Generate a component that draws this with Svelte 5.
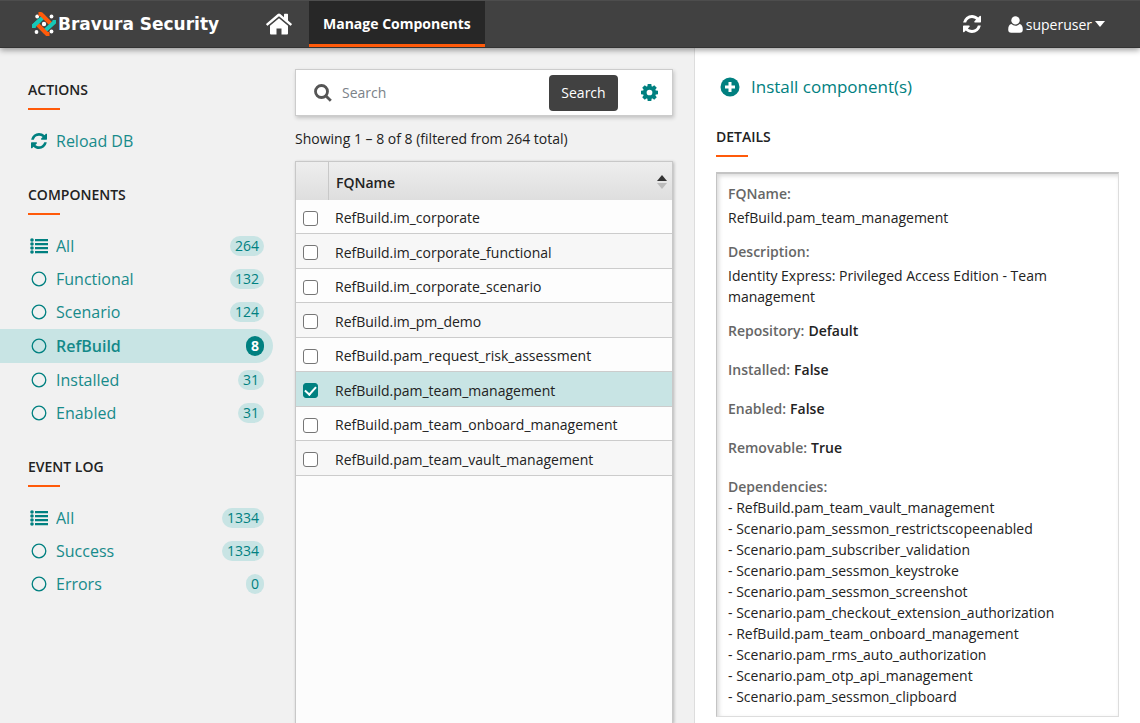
<script>
	let query = $state('');
	let activeFilter = $state('RefBuild');
	let selected = $state(['RefBuild.pam_team_management']);

	const components = [
		{ name: 'All', count: 264, icon: 'list' },
		{ name: 'Functional', count: 132 },
		{ name: 'Scenario', count: 124 },
		{ name: 'RefBuild', count: 8 },
		{ name: 'Installed', count: 31 },
		{ name: 'Enabled', count: 31 }
	];

	const events = [
		{ name: 'All', count: 1334, icon: 'list' },
		{ name: 'Success', count: 1334 },
		{ name: 'Errors', count: 0 }
	];

	const rows = [
		'RefBuild.im_corporate',
		'RefBuild.im_corporate_functional',
		'RefBuild.im_corporate_scenario',
		'RefBuild.im_pm_demo',
		'RefBuild.pam_request_risk_assessment',
		'RefBuild.pam_team_management',
		'RefBuild.pam_team_onboard_management',
		'RefBuild.pam_team_vault_management'
	];

	const flags = [
		{ label: 'Repository', value: 'Default' },
		{ label: 'Installed', value: 'False' },
		{ label: 'Enabled', value: 'False' },
		{ label: 'Removable', value: 'True' }
	];

	const dependencies = [
		'RefBuild.pam_team_vault_management',
		'Scenario.pam_sessmon_restrictscopeenabled',
		'Scenario.pam_subscriber_validation',
		'Scenario.pam_sessmon_keystroke',
		'Scenario.pam_sessmon_screenshot',
		'Scenario.pam_checkout_extension_authorization',
		'RefBuild.pam_team_onboard_management',
		'Scenario.pam_rms_auto_authorization',
		'Scenario.pam_otp_api_management',
		'Scenario.pam_sessmon_clipboard'
	];
</script>

{#snippet refreshIcon()}
	<svg viewBox="0 0 1536 1536" aria-hidden="true">
		<path
			d="M1511 928q0 5-1 7-64 268-268 434.500T764 1536q-146 0-282.500-55T238 1324l-129 129q-19 19-45 19t-45-19-19-45V960q0-26 19-45t45-19h448q26 0 45 19t19 45-19 45l-137 137q71 66 161 102t187 36q134 0 250-65t186-179q11-17 53-117 8-23 30-23h192q13 0 22.500 9.500t9.500 22.500zm25-800v448q0 26-19 45t-45 19h-448q-26 0-45-19t-19-45 19-45l138-138Q969 256 768 256q-134 0-250 65T332 500q-11 17-53 117-8 23-30 23H50q-13 0-22.500-9.500T18 608v-7q65-268 270-434.500T768 0q146 0 284 55.500T1297 212l130-129q19-19 45-19t45 19 19 45z"
		/>
	</svg>
{/snippet}

{#snippet navList(items, active)}
	<ul class="nav-list">
		{#each items as item (item.name)}
			<li>
				<a
					href="#{item.name.toLowerCase()}"
					class="nav-item"
					class:active={item.name === active}
					onclick={() => items === components && (activeFilter = item.name)}
				>
					<span class="nav-icon">
						{#if item.icon === 'list'}
							<svg viewBox="0 0 18 16" aria-hidden="true">
								<circle cx="2" cy="2" r="1.800" />
								<circle cx="2" cy="6" r="1.800" />
								<circle cx="2" cy="10" r="1.800" />
								<circle cx="2" cy="14" r="1.800" />
								<path d="M5 1h13v2.200H5zM5 5h13v2.200H5zM5 9h13v2.200H5zM5 13h13v2.200H5z" />
							</svg>
						{:else}
							<svg viewBox="0 0 18 16" aria-hidden="true">
								<circle cx="9" cy="8" r="6.800" class="ring" />
							</svg>
						{/if}
					</span>
					<span class="nav-name">{item.name}</span>
					<span class="count">{item.count}</span>
				</a>
			</li>
		{/each}
	</ul>
{/snippet}

<div class="page">
	<header class="topbar">
		<a href="#top" class="brand">
			<svg class="brand-mark" viewBox="0 0 24 24" aria-hidden="true">
				<g fill="#fff">
					<circle cx="5.200" cy="4.500" r="1.900" />
					<circle cx="19.500" cy="4.500" r="1.900" />
					<circle cx="4.500" cy="20" r="1.900" />
					<circle cx="19.500" cy="19.500" r="1.900" />
					<circle cx="12" cy="12" r="2.200" />
				</g>
				<g fill="none" stroke-width="4" stroke-linejoin="round">
					<path stroke="#17c8b8" d="M1.500 16v-2L13 3.500" />
					<path stroke="#ff5a0a" d="M6.500 2H9l10 10" />
					<path stroke="#17c8b8" d="M22.500 8v2L11 20.500" />
					<path stroke="#ff5a0a" d="M17.500 22H15L5 12" />
					<path stroke="#17c8b8" d="M1.500 16v-2L8 8" />
				</g>
			</svg>
			<span>Bravura Security</span>
		</a>
		<a href="#home" class="home" aria-label="Home">
			<svg viewBox="0 0 26 22" aria-hidden="true">
				<path d="M13 5.200 4 12.800V20.500q0 1 1 1h5.500v-6h5v6H21q1 0 1-1v-7.700z" />
				<path
					d="M25.700 10.700 22 7.500V1.500q0-.7-.7-.7h-2.600q-.7 0-.7.7v2.700L14.300.900q-1.300-1-2.600 0L.300 10.700q-.4.400-.1.800l.9 1q.4.400.8.100L13 3.300l11.100 9.300q.5.300.8-.1l.9-1q.3-.4-.1-.8z"
				/>
			</svg>
		</a>
		<a href="#components" class="tab">Manage Components</a>
		<div class="tools">
			<button type="button" class="refresh" aria-label="Refresh">{@render refreshIcon()}</button>
			<button type="button" class="user">
				<svg class="person" viewBox="0 0 15 17" aria-hidden="true">
					<circle cx="7.500" cy="4.400" r="4.200" />
					<path d="M3.400 8q-3.200.6-3.200 5.500 0 3.300 3 3.300h8.600q3 0 3-3.300 0-4.900-3.200-5.500-1.800 1.700-4.100 1.700T3.400 8z" />
				</svg>
				<span>superuser</span>
				<svg class="caret" viewBox="0 0 10 6" aria-hidden="true"><path d="M0 0h10L5 6z" /></svg>
			</button>
		</div>
	</header>

	<div class="columns">
		<nav class="sidebar">
			<section>
				<h2>Actions</h2>
				<a href="#reload" class="nav-item">
					<span class="nav-icon">{@render refreshIcon()}</span>
					<span class="nav-name">Reload DB</span>
				</a>
			</section>
			<section>
				<h2>Components</h2>
				{@render navList(components, activeFilter)}
			</section>
			<section>
				<h2>Event log</h2>
				{@render navList(events, null)}
			</section>
		</nav>

		<main class="results">
			<form class="search" onsubmit={(e) => e.preventDefault()}>
				<svg class="lens" viewBox="0 0 18 18" aria-hidden="true">
					<circle cx="7.500" cy="7.500" r="6" />
					<path d="m12 12 4.800 4.800" />
				</svg>
				<input type="text" placeholder="Search" aria-label="Search" bind:value={query} />
				<button type="submit" class="go">Search</button>
				<button type="button" class="settings" aria-label="Settings">
					<svg viewBox="0 0 16 16" aria-hidden="true">
						{#each [0, 45, 90, 135] as angle}
							<path
								transform="rotate({angle} 8 8)"
								d="M6.300 0h3.400l.5 3.500H5.800zM5.800 12.500h4.400L9.700 16H6.300z"
							/>
						{/each}
						<circle cx="8" cy="8" r="4.400" fill="none" stroke="currentColor" stroke-width="3.400" />
					</svg>
				</button>
			</form>
			<p class="summary">Showing 1 – 8 of 8 (filtered from 264 total)</p>
			<div class="table-wrap">
				<table>
					<thead>
						<tr>
							<th class="check"></th>
							<th>
								<span class="th-inner">
									FQName
									<svg viewBox="0 0 10 14" aria-hidden="true">
										<path d="M5 0l5 6H0z" fill="#333" />
										<path d="M0 8h10l-5 6z" fill="#bbb" />
									</svg>
								</span>
							</th>
						</tr>
					</thead>
					<tbody>
						{#each rows as row (row)}
							<tr class:selected={selected.includes(row)}>
								<td class="check">
									<input type="checkbox" value={row} aria-label={row} bind:group={selected} />
								</td>
								<td>{row}</td>
							</tr>
						{/each}
					</tbody>
				</table>
			</div>
		</main>

		<aside class="details">
			<a href="#install" class="install">
				<svg viewBox="0 0 20 20" aria-hidden="true">
					<circle cx="10" cy="10" r="9.500" />
					<path d="M10 5v10M5 10h10" />
				</svg>
				<span>Install component(s)</span>
			</a>
			<h2>Details</h2>
			<dl class="card">
				<div class="stacked">
					<dt>FQName:</dt>
					<dd>RefBuild.pam_team_management</dd>
				</div>
				<div class="stacked">
					<dt>Description:</dt>
					<dd>Identity Express: Privileged Access Edition - Team management</dd>
				</div>
				{#each flags as flag (flag.label)}
					<div class="inline">
						<dt>{flag.label}:</dt>
						<dd>{flag.value}</dd>
					</div>
				{/each}
				<div>
					<dt>Dependencies:</dt>
					{#each dependencies as dependency (dependency)}
						<dd>- {dependency}</dd>
					{/each}
				</div>
			</dl>
		</aside>
	</div>
</div>

<style>
	:global(body) {
		background: #f1f1f1;
	}

	.page {
		--teal: #008080;
		--pale: #c8e4e4;
		--orange: #ff5a0a;
		height: 100vh;
		display: flex;
		flex-direction: column;
		overflow: hidden;
		color: #222;
		font: 14px/21px 'Open Sans', sans-serif;
	}

	.page * {
		box-sizing: border-box;
	}

	a {
		color: inherit;
		text-decoration: none;
	}

	button {
		padding: 0;
		border: 0;
		background: none;
		color: inherit;
		font: inherit;
		cursor: pointer;
	}

	svg {
		display: block;
		flex: none;
		fill: currentColor;
	}

	.topbar {
		position: relative;
		z-index: 1;
		flex: none;
		height: 48px;
		display: flex;
		align-items: stretch;
		background: #414141;
		border-top: 1px solid #4d4d4d;
		border-bottom: 1px solid #333;
		box-shadow: 0 2px 6px rgba(0, 0, 0, 0.4);
		color: #fff;
	}

	.brand {
		width: 266px;
		padding-left: 32px;
		display: flex;
		align-items: center;
		gap: 2px;
		font: 700 17px/24px 'DejaVu Sans', sans-serif;
		white-space: nowrap;
	}

	.brand-mark {
		width: 24px;
		height: 24px;
	}

	.home {
		width: 43px;
		display: flex;
		align-items: center;
	}

	.home svg {
		width: 26px;
		height: 22px;
	}

	.tab {
		padding: 2px 14px 0;
		display: flex;
		align-items: center;
		background: #272727;
		border-bottom: 3px solid var(--orange);
		font-weight: 700;
	}

	.tools {
		margin-left: auto;
		padding-right: 35px;
		display: flex;
		align-items: center;
		gap: 27px;
	}

	.refresh svg {
		width: 18px;
		height: 18px;
	}

	.user {
		display: flex;
		align-items: center;
		gap: 3px;
	}

	.person {
		width: 15px;
		height: 17px;
	}

	.caret {
		width: 10px;
		height: 6px;
	}

	.columns {
		flex: 1;
		min-height: 0;
		display: grid;
		grid-template-columns: 295px minmax(0, 399fr) minmax(0, 446fr);
		grid-template-rows: minmax(0, 1fr);
	}

	h2 {
		margin: 0;
		font-size: 14px;
		line-height: 20px;
		font-weight: 600;
		text-transform: uppercase;
	}

	h2::after {
		content: '';
		display: block;
		width: 32px;
		height: 2px;
		margin-top: 8px;
		background: var(--orange);
	}

	.sidebar {
		padding: 32px 22px 0 0;
		display: flex;
		flex-direction: column;
		gap: 28px;
		color: var(--teal);
		font-size: 16px;
		line-height: 24px;
	}

	.sidebar h2 {
		margin: 0 0 14px 28px;
		color: #222;
	}

	.nav-list {
		margin: 0;
		padding: 0;
		list-style: none;
	}

	.nav-item {
		height: 33px;
		padding: 0 9px 0 30px;
		display: flex;
		align-items: center;
		gap: 8px;
	}

	.nav-item.active {
		height: 34px;
		margin-top: 1px;
		background: var(--pale);
		border-radius: 0 17px 17px 0;
		font-weight: 600;
	}

	.nav-icon {
		width: 18px;
		display: grid;
		place-items: center;
	}

	.nav-icon svg {
		width: 18px;
		height: 16px;
	}

	.nav-name {
		opacity: 0.9;
	}

	.ring {
		fill: none;
		stroke: currentColor;
		stroke-width: 1.3;
	}

	.count {
		margin-left: auto;
		padding: 0 5px;
		background: var(--pale);
		border-radius: 10px;
		font-size: 14px;
		line-height: 20px;
	}

	.active .count {
		background: var(--teal);
		color: #fff;
		font-weight: 700;
	}

	.results {
		padding: 21px 21px 0 0;
		display: flex;
		flex-direction: column;
	}

	.search {
		height: 47px;
		padding-left: 18px;
		display: flex;
		align-items: center;
		background: #fff;
		border: 1px solid #ccc;
		box-shadow: 1px 2px 4px rgba(0, 0, 0, 0.2);
	}

	.lens {
		width: 18px;
		height: 18px;
		fill: none;
		stroke: #555;
		stroke-width: 2.8;
	}

	.search input {
		flex: 1;
		min-width: 0;
		padding: 0 10px;
		border: 0;
		outline: 0;
		color: #222;
		font: inherit;
	}

	.search input::placeholder {
		color: #7b8288;
	}

	.go {
		width: 69px;
		height: 36px;
		background: #414141;
		border-radius: 4px;
		color: #fff;
	}

	.settings {
		width: 54px;
		display: grid;
		place-items: center;
		padding-left: 8px;
		color: var(--teal);
	}

	.settings svg {
		width: 17px;
		height: 17px;
	}

	.summary {
		margin: 12px 0;
	}

	.table-wrap {
		flex: 1;
		background: #fcfcfc;
		border: 1px solid #c8c8c8;
		border-bottom: 0;
		box-shadow: 1px 1px 3px rgba(0, 0, 0, 0.25);
	}

	table {
		width: 100%;
		border-collapse: separate;
		border-spacing: 0;
	}

	th,
	td {
		text-align: left;
	}

	th {
		height: 38px;
		padding: 2px 5px 0 7px;
		background: linear-gradient(#eee, #dedede);
		font-weight: 600;
	}

	.th-inner {
		display: flex;
		align-items: center;
		justify-content: space-between;
	}

	.th-inner svg {
		width: 10px;
		height: 14px;
	}

	th.check {
		border-right: 1px solid #c8c8c8;
	}

	td {
		height: 34px;
		padding: 2px 6px 0;
		background: #fdfdfd;
		border-bottom: 1px solid #ccc;
	}

	tr:nth-child(even) td {
		height: 35px;
		background: #f7f7f7;
	}

	tr.selected:nth-child(n) td {
		background: var(--pale);
	}

	.check {
		width: 33px;
		padding: 2px 0 0 7px;
	}

	input[type='checkbox'] {
		appearance: none;
		display: grid;
		place-items: center;
		width: 15px;
		height: 15px;
		margin: 1px 0 0;
		background: #fff;
		border: 1px solid #767676;
		border-radius: 3px;
	}

	input[type='checkbox']:checked {
		background: var(--teal);
		border-color: var(--teal);
	}

	input[type='checkbox']:checked::after {
		content: '';
		width: 5px;
		height: 9px;
		margin-bottom: 2px;
		border: solid #fff;
		border-width: 0 2px 2px 0;
		transform: rotate(42deg);
	}

	.details {
		padding: 27px 21px 8px;
		display: flex;
		flex-direction: column;
		background: #fff;
		border-left: 1px solid #ddd;
	}

	.install {
		margin-bottom: 28px;
		padding-left: 4px;
		display: flex;
		align-items: center;
		gap: 11px;
		color: var(--teal);
		font-size: 17px;
		font-weight: 500;
		line-height: 24px;
	}

	.install svg {
		width: 20px;
		height: 20px;
	}

	.install path {
		stroke: #fff;
		stroke-width: 3;
	}

	.card {
		flex: 1;
		margin: 15px 0 0;
		padding: 9px 11px;
		display: flex;
		flex-direction: column;
		gap: 18px;
		border: 1px solid #ddd;
		border-top: 2px solid #c4c4c4;
		border-left: 1px solid #c4c4c4;
		box-shadow: inset 2px 2px 4px rgba(0, 0, 0, 0.15);
	}

	.card dt {
		color: #666;
		font-weight: 600;
	}

	.card dd {
		margin: 0;
	}

	.stacked {
		margin-bottom: -5px;
	}

	.stacked dd {
		margin-top: 3px;
	}

	.inline {
		display: flex;
		gap: 4px;
	}

	.inline dd {
		font-weight: 600;
	}
</style>
